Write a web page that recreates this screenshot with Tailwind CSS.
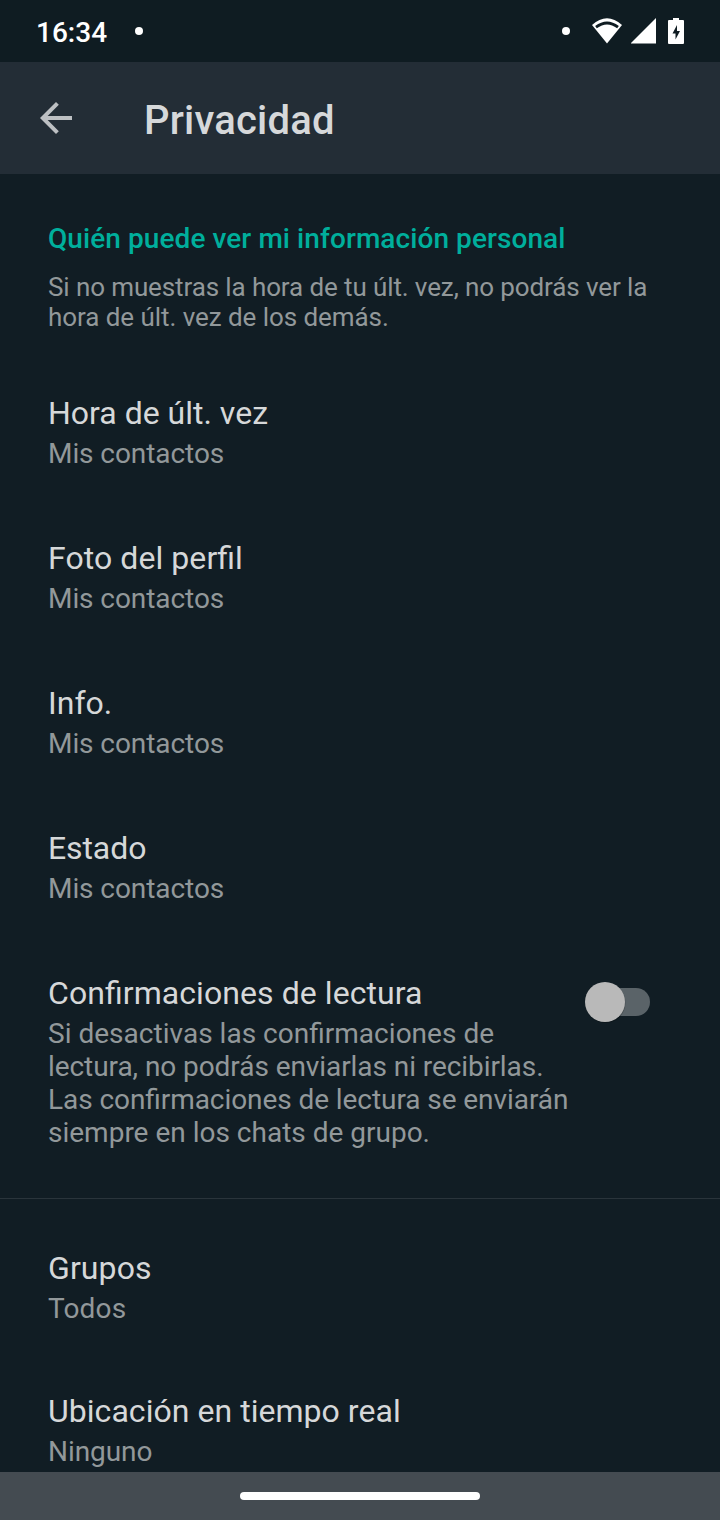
<!DOCTYPE html>
<html lang="es"><head><meta charset="utf-8"><title>Privacidad</title>
<script src="https://cdn.jsdelivr.net/npm/@tailwindcss/browser@4"></script></head>
<body class="w-[720px] h-[1520px] overflow-hidden bg-[#111d24] font-['Roboto',sans-serif] [font-feature-settings:'liga'_1] flex flex-col">
<div class="h-[62px] shrink-0 flex items-center bg-[#0f1c22] text-white pl-[36px]">
<span class="text-[28px] font-medium leading-[33px] pt-[3px]">16:34</span>
<span class="ml-[28px] size-2 rounded-full bg-white"></span>
<svg class="ml-auto" width="180" height="62" viewBox="540 0 180 62" fill="#fff"><circle cx="566" cy="31" r="4"/><path d="M607 43.500 L592 25 Q607 11.500 622 25 Z"/><path d="M596 27.200 Q607 18.800 618 27.200" fill="none" stroke="#0f1c22" stroke-width="2.800"/><path d="M631 43.500 V43 L656 18 V43.500 Z"/><path fill-rule="evenodd" d="M673 18h6v2h4a1 1 0 0 1 1 1v22a1 1 0 0 1-1 1h-14a1 1 0 0 1-1-1V21a1 1 0 0 1 1-1h4zM677 25l-4.500 8.500h3v6l4.500-8.500h-3z"/></svg>
</div>
<header class="h-[112px] shrink-0 bg-[#232d36] flex items-center pl-10 text-[#d6d8da]">
<svg width="32" height="32" viewBox="4 4 16 16" fill="#bdc0c3"><path d="M20 11H7.830l5.590-5.590L12 4l-8 8 8 8 1.410-1.410L7.830 13H20v-2z"/></svg>
<h1 class="ml-[72px] pt-[4px] text-[40px] font-medium leading-[47px] tracking-[0.2px]">Privacidad</h1>
</header>
<main class="flex-1 min-h-0 overflow-hidden text-[#92989a] text-[28px] leading-[33px]">
<section class="px-12 pt-[48px] h-[220px]"><h2 class="text-[28px] leading-[33px] font-medium tracking-[0.077px] text-[#00af9c]">Quién puede ver mi información personal</h2>
<p class="mt-[17px] text-[26px] leading-[30px] tracking-[-0.11px]">Si no muestras la hora de tu últ. vez, no podrás ver la<br><span class="tracking-[-0.06px]">hora de últ. vez de los demás.</span></p></section>
<section class="px-12">
<div class="h-[145px]"><h3 class="text-[32px] leading-[38px] text-[#d6d8d9] mb-[5px]">Hora de últ. vez</h3><p class="tracking-[-0.07px]">Mis contactos</p></div>
<div class="h-[145px]"><h3 class="text-[32px] leading-[38px] text-[#d6d8d9] mb-[5px] tracking-[0.07px]">Foto del perfil</h3><p class="tracking-[-0.07px]">Mis contactos</p></div>
<div class="h-[145px]"><h3 class="text-[32px] leading-[38px] text-[#d6d8d9] mb-[5px]">Info.</h3><p class="tracking-[-0.07px]">Mis contactos</p></div>
<div class="h-[145px]"><h3 class="text-[32px] leading-[38px] text-[#d6d8d9] mb-[5px] tracking-[-0.1px]">Estado</h3><p class="tracking-[-0.07px]">Mis contactos</p></div>
<div class="h-[224px] flex justify-between"><div><h3 class="text-[32px] leading-[38px] text-[#d6d8d9] mb-[5px] tracking-[0.07px]">Confirmaciones de lectura</h3><p><span class="tracking-[0.02px]">Si desactivas las confirmaciones de</span><br><span class="tracking-[-0.07px]">lectura, no podrás enviarlas ni recibirlas.<br>Las confirmaciones de lectura se enviarán</span><br>siempre en los chats de grupo.</p></div>
<svg class="mr-[18px] mt-[2px]" width="72" height="48" viewBox="582 976 72 48"><rect x="594" y="988" width="56" height="28" rx="14" fill="#5a6368"/><circle cx="605.500" cy="1003" r="20" fill="#000" opacity=".2"/><circle cx="605" cy="1002" r="20" fill="#b9b9b9"/></svg></div>
</section>
<section class="border-t border-[#2a343b] px-12 pt-[50px]">
<div class="h-[143px]"><h3 class="text-[32px] leading-[38px] text-[#d6d8d9] mb-[5px] tracking-[0.1px]">Grupos</h3><p class="tracking-[0.15px]">Todos</p></div>
<div><h3 class="text-[32px] leading-[38px] text-[#d6d8d9] mb-[5px] tracking-[0.04px]">Ubicación en tiempo real</h3><p class="tracking-[-0.07px]">Ninguno</p></div>
</section></main>
<footer class="h-12 shrink-0 bg-[#444b51] flex items-center justify-center"><div class="w-60 h-2 rounded-full bg-white"></div></footer>
</body></html>
